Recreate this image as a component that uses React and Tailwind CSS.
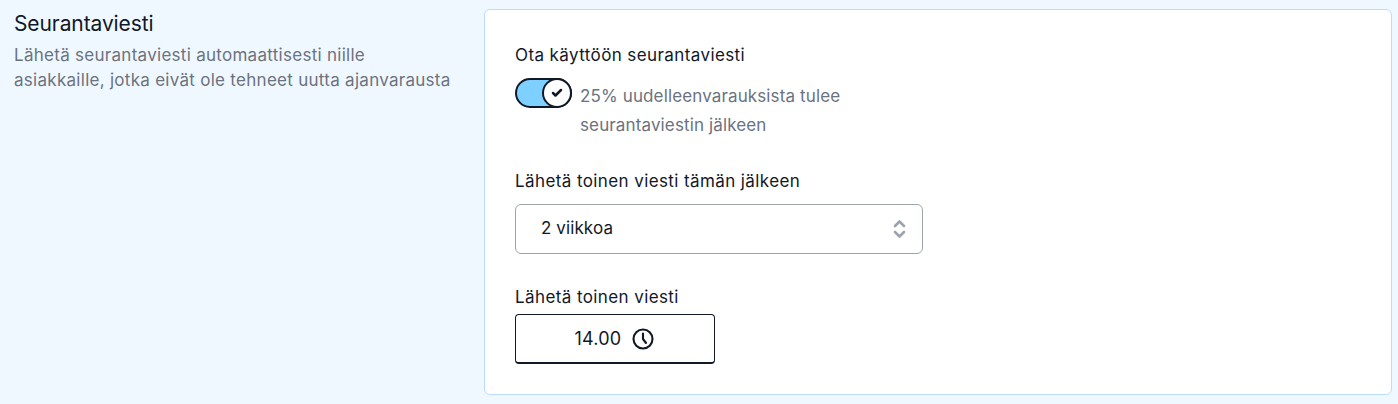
import React from 'react';
import { Check } from 'lucide-react';

const App = () => {
  return (
    <div className="h-[404px] overflow-hidden bg-[#f0f8ff] font-['Inter',sans-serif] text-[#111827] flex pl-[14px] pr-[6px] pt-[9px]">
      {/* left column */}
      <div className="w-[470px] shrink-0">
        <h2 className="text-[21px] leading-[28px] mt-[1px] -tracking-[0.1px]">Seurantaviesti</h2>
        <p className="text-[17px] leading-[25px] tracking-[0.28px] text-[#6b7280] mt-[5px] w-[440px]">
          Lähetä seurantaviesti automaattisesti niille asiakkaille, jotka eivät ole tehneet uutta ajanvarausta
        </p>
      </div>

      {/* card */}
      <div className="flex-1 h-[386px] bg-white border border-[#b9dcff] rounded-md pl-[30px] pt-[33px]">
        <div className="text-[17px] leading-6 tracking-[0.4px]">Ota käyttöön seurantaviesti</div>

        <div className="flex items-start gap-2 mt-[10px] w-[400px]">
          <div className="relative shrink-0 w-[57px] h-[30px] mt-[1px] rounded-full bg-[#7dd0ff] border-2 border-[#111827]">
            <div className="absolute -right-[2px] -top-[2px] w-[30px] h-[30px] rounded-full bg-white border-2 border-[#111827] flex items-center justify-center">
              <Check size={12} strokeWidth={5} />
            </div>
          </div>
          <p className="text-[17px] leading-[29px] tracking-[0.13px] text-[#6b7280] mt-[5px]">25% uudelleenvarauksista tulee seurantaviestin jälkeen</p>
        </div>

        <div className="text-[17px] leading-6 tracking-[0.4px] mt-[29px]">Lähetä toinen viesti tämän jälkeen</div>
        <div className="mt-[11px] w-[408px] h-[50px] border border-[#9ca3af] rounded-md flex items-center justify-between pl-[25px] pr-[16px]">
          <span className="text-[17px] tracking-[0.1px]">2 viikkoa</span>
          <svg width="13" height="20" viewBox="0 0 13 20" fill="none" stroke="#9ca3af" strokeWidth="2.6" strokeLinecap="round" strokeLinejoin="round">
            <path d="M2 7l4.5-4.5L11 7" />
            <path d="M2 13l4.5 4.5L11 13" />
          </svg>
        </div>

        <div className="text-[17px] leading-6 tracking-[0.4px] mt-[31px]">Lähetä toinen viesti</div>
        <div className="mt-[5px] w-[200px] h-[50px] border border-[#111827] border-b-2 rounded-[4px] flex items-center justify-center gap-[10px]">
          <span className="text-lg tracking-[0.2px]">14.00</span>
          <svg width="24" height="24" viewBox="0 0 24 24" fill="none" stroke="currentColor" strokeWidth="2.1" strokeLinecap="round" strokeLinejoin="round">
            <circle cx="12" cy="12" r="9.5" />
            <path d="M12 6.5V12l3 4" />
          </svg>
        </div>
      </div>
    </div>
  );
};

export default App;
